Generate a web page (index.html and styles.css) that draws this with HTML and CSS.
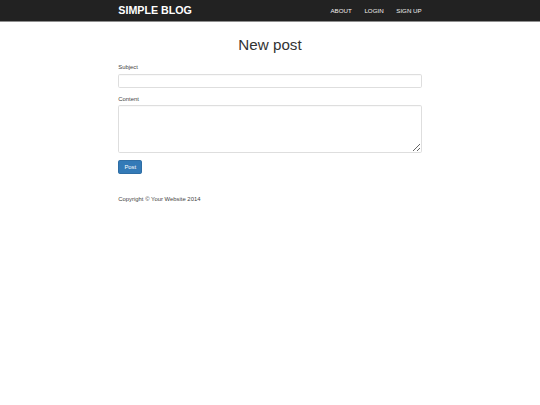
FILE: index.html
```html
<!DOCTYPE html>
<html lang="en">
<head>
<meta charset="utf-8">
<title>Simple Blog - New post</title>
<link rel="stylesheet" href="styles.css">
</head>
<body>
<nav class="navbar">
  <div class="container nav-inner">
    <a class="brand" href="#">SIMPLE BLOG</a>
    <ul class="nav-links">
      <li><a href="#">ABOUT</a></li>
      <li><a href="#">LOGIN</a></li>
      <li><a href="#">SIGN UP</a></li>
    </ul>
  </div>
</nav>
<main class="container">
  <h1 class="page-title">New post</h1>
  <form class="post-form">
    <div class="form-group">
      <label for="subject">Subject</label>
      <input id="subject" class="form-control" type="text">
    </div>
    <div class="form-group">
      <label for="content">Content</label>
      <textarea id="content" class="form-control textarea"></textarea>
    </div>
    <button type="button" class="btn-primary">Post</button>
  </form>
  <footer class="footer">
    <p>Copyright &copy; Your Website 2014</p>
  </footer>
</main>
</body>
</html>
```

FILE: styles.css
```css
* { box-sizing: border-box; }
html, body { margin: 0; padding: 0; background: #fff; }
body {
  font-family: "Liberation Sans", Arial, sans-serif;
  font-size: 5.9px;
  line-height: 1.42857;
  color: #333;
}
.container {
  width: 316px;
  margin: 0 auto;
  padding: 0 6.3px;
}
.navbar {
  background: #222;
  height: 22px;
  border-bottom: 1px solid #8e8e8e;
}
.nav-inner {
  display: flex;
  align-items: center;
  justify-content: space-between;
  height: 21px;
}
.brand {
  color: #fff;
  font-weight: bold;
  font-size: 10.7px;
  text-decoration: none;
  line-height: 21px;
}
.nav-links {
  list-style: none;
  display: flex;
  margin: 0 -6.3px 0 0;
  padding: 0;
}
.nav-links a {
  display: block;
  padding: 0 6.3px;
  color: #f0f0f0;
  text-decoration: none;
  font-size: 6.2px;
  line-height: 21px;
}
.page-title {
  margin: 15.4px 0 9.3px;
  text-align: center;
  font-size: 15.2px;
  font-weight: normal;
  line-height: 1.1;
  color: #333;
}
.form-group { margin-bottom: 6.3px; }
label {
  display: block;
  margin-bottom: 2.1px;
  font-size: 5.9px;
  color: #444;
}
.form-control {
  display: block;
  width: 100%;
  height: 14.4px;
  padding: 2.5px 5px;
  border: 1px solid #dedede;
  border-radius: 1.7px;
  background: #fff;
  font: inherit;
  box-shadow: inset 0 0.4px 0.6px rgba(0,0,0,0.05);
}
.textarea {
  height: 48.2px;
  resize: vertical;
}
.btn-primary {
  display: block;
  height: 14.6px;
  padding: 0 5.1px;
  width: 23.5px;
  background: #337ab7;
  border: 1px solid #2e6da4;
  border-radius: 1.7px;
  color: #fff;
  font-family: inherit;
  font-size: 5.9px;
  line-height: 12px;
}
.footer { margin-top: 20.3px; }
.footer p { margin: 0; font-size: 5.9px; color: #444; }
```
